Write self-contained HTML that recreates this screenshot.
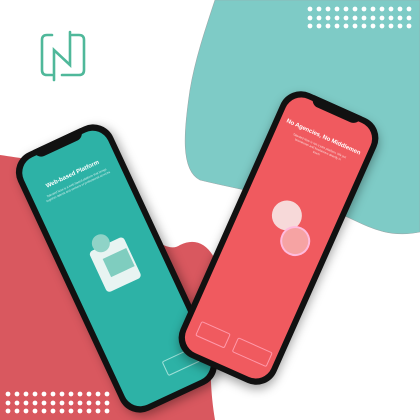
<!DOCTYPE html>
<html><head><meta charset="utf-8"><style>
html,body{margin:0;padding:0;width:420px;height:420px;overflow:hidden;background:#fff;font-family:"Liberation Sans",sans-serif}
.abs{position:absolute}
.phone{position:absolute;background:#111;border-radius:22px;box-shadow:2px 4px 10px rgba(0,0,0,.35)}
.scr{position:absolute;left:6px;top:6px;right:6px;bottom:6px;border-radius:17px;overflow:hidden}
.notch{position:absolute;left:50%;top:0;width:52px;height:10px;margin-left:-26px;background:#111;border-radius:0 0 8px 8px}
.t{position:absolute;left:0;right:0;text-align:center;color:#fff;white-space:nowrap}
</style></head><body>
<svg class="abs" style="left:0;top:0" width="420" height="420">
 <path d="M215 0 C205 30 195 60 190 90 C184 130 180 170 200 180 C240 190 300 200 330 210 C360 220 380 240 420 232 L420 0 Z" fill="#7ecbc6" stroke="#9aa" stroke-width="0.6"/>
 <path d="M0 155 C20 158 40 160 60 170 C120 200 160 260 180 245 C200 235 215 250 220 275 C215 320 205 360 215 420 L0 420 Z" fill="#d9585f"/>
 <g fill="#fff">
  <g id="r">
   <circle cx="310" cy="9" r="2.4"/><circle cx="319" cy="9" r="2.4"/><circle cx="328" cy="9" r="2.4"/><circle cx="337" cy="9" r="2.4"/><circle cx="346" cy="9" r="2.4"/><circle cx="355" cy="9" r="2.4"/><circle cx="364" cy="9" r="2.4"/><circle cx="373" cy="9" r="2.4"/><circle cx="382" cy="9" r="2.4"/><circle cx="391" cy="9" r="2.4"/><circle cx="400" cy="9" r="2.4"/><circle cx="409" cy="9" r="2.4"/>
  </g>
  <use href="#r" y="9"/><use href="#r" y="17"/>
  <g transform="translate(-302,385)"><use href="#r"/><use href="#r" y="9"/><use href="#r" y="17"/></g>
 </g>
 <g fill="none" stroke="#4fb89a" stroke-width="2.6" stroke-linecap="round">
  <path d="M52 35 H47 Q42 35 42 40 V70 Q42 75 47 75 H52"/>
  <path d="M72 35 H79 Q84 35 84 40 V70 Q84 75 79 75 H62"/>
  <path d="M54 80 V50 L70 65 V32"/>
 </g>
</svg>

<div class="phone" style="left:64px;top:126px;width:105px;height:285px;transform:rotate(-25deg)">
 <div class="scr" style="background:#2db2a6">
  <div class="t" style="top:30px;font-size:6px;font-weight:bold">Web-based Platform</div>
  <div class="t" style="top:40px;font-size:3px;opacity:.8">Talented Now is a web-based platform that brings<br>together talents and seekers of professional services</div>
  <div class="abs" style="left:28px;top:110px;width:38px;height:45px;background:#e8f4f2;border-radius:4px"></div>
  <div class="abs" style="left:34px;top:98px;width:18px;height:18px;background:#8fd3c7;border-radius:50%"></div>
  <div class="abs" style="left:38px;top:122px;width:26px;height:20px;background:#7fcdbf"></div>
  <div class="abs" style="left:48px;top:240px;width:36px;height:14px;border:1px solid #9fe0d8;border-radius:2px"></div>
 </div>
 <div class="notch"></div>
</div>

<div class="phone" style="left:226px;top:93px;width:105px;height:290px;transform:rotate(24deg)">
 <div class="scr" style="background:#f05a5f">
  <div class="t" style="top:26px;font-size:6px;font-weight:bold">No Agencies, No Middlemen</div>
  <div class="t" style="top:36px;font-size:3px;opacity:.8">Talented Now is not a jobs platform. We put<br>businesses and freelancers directly in<br>touch</div>
  <div class="abs" style="left:30px;top:100px;width:30px;height:30px;background:#f7d9d9;border-radius:50%"></div>
  <div class="abs" style="left:48px;top:120px;width:26px;height:26px;background:#f6a3a3;border-radius:50%;border:2px solid #fbd"></div>
  <div class="abs" style="left:10px;top:246px;width:30px;height:14px;border:1px solid #f9a;border-radius:2px"></div>
  <div class="abs" style="left:50px;top:246px;width:36px;height:14px;border:1px solid #f9a;border-radius:2px"></div>
 </div>
 <div class="notch"></div>
</div>
</body></html>
